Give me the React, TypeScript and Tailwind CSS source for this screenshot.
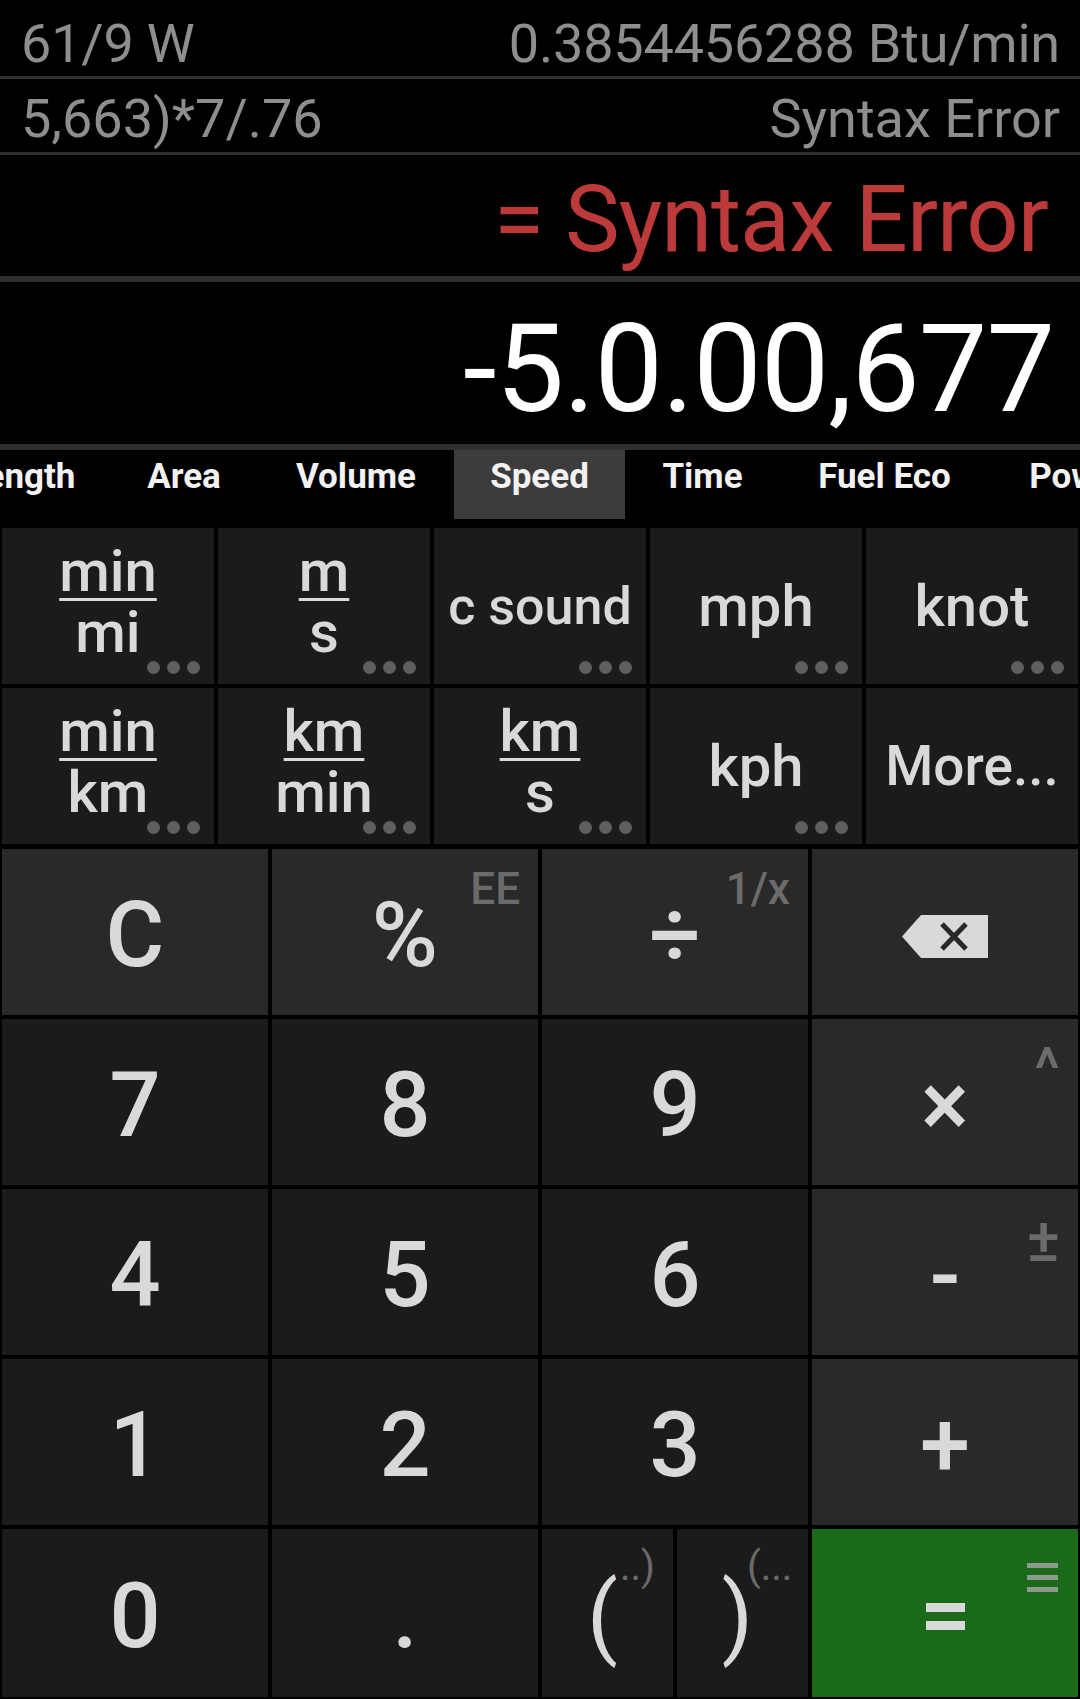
import React from "react";

const Dots = () => (
  <div className="absolute bottom-[10px] right-[14px] flex gap-[7px]">
    <div className="w-[13px] h-[13px] rounded-full bg-[#5e5e5e]" />
    <div className="w-[13px] h-[13px] rounded-full bg-[#5e5e5e]" />
    <div className="w-[13px] h-[13px] rounded-full bg-[#5e5e5e]" />
  </div>
);

const UnitKey = ({ num, den, label, size, dots = true }: { num?: string; den?: string; label?: string; size?: string; dots?: boolean }) => (
  <div className="relative bg-[#1b1b1b] flex flex-col items-center justify-center text-[#d9d9d9] font-medium">
    {label ? (
      <div className={`${size ?? "text-[58px]"} leading-[61px]`}>{label}</div>
    ) : (
      <div className="flex flex-col items-center pb-[8px] text-[58px] leading-[61px]">
        <div className="underline decoration-[3px] underline-offset-[7px]">{num}</div>
        <div>{den}</div>
      </div>
    )}
    {dots && <Dots />}
  </div>
);

const Sup = ({ children, cls = "" }: { children: React.ReactNode; cls?: string }) => (
  <div className={`absolute leading-none font-medium text-[#6b6b6b] ${cls}`}>{children}</div>
);

const BigKey = ({ children, bg = "bg-[#1b1b1b]", sup }: { children: React.ReactNode; bg?: string; sup?: React.ReactNode }) => (
  <div className={`relative ${bg} flex items-center justify-center text-[#d9d9d9] text-[90px] leading-none font-medium`}>
    <div className="pt-[8px]">{children}</div>
    {sup}
  </div>
);

const Backspace = () => (
  <svg width="86" height="43" viewBox="0 0 86 43">
    <polygon points="0,21.5 19,0 86,0 86,43 19,43" fill="#d9d9d9" />
    <path d="M40 9 L64 34 M64 9 L40 34" stroke="#292929" strokeWidth="5" />
  </svg>
);

export default function App() {
  const tabs = [
    { t: "Length", w: "w-[178px]" },
    { t: "Area", w: "w-[148px]" },
    { t: "Volume", w: "w-[196px]" },
    { t: "Speed", w: "w-[171px]", sel: true },
    { t: "Time", w: "w-[155px]" },
    { t: "Fuel Eco", w: "w-[209px]" },
    { t: "Power", w: "w-[180px]" },
  ];
  return (
    <div
      className="w-[1080px] h-[1699px] bg-black flex flex-col overflow-hidden"
      style={{ fontFamily: "Roboto, 'Noto Sans', sans-serif" }}
    >
      {/* history rows */}
      <div className="h-[76px] flex items-end justify-between pl-[21px] pr-[20px] pb-[5px] text-[54px] leading-none tracking-[-0.2px] text-[#8e8e8e]">
        <span>61/9 W</span>
        <span>0.3854456288 Btu/min</span>
      </div>
      <div className="h-[3px] bg-[#303030]" />
      <div className="h-[73px] flex items-end justify-between pl-[21px] pr-[20px] pb-[6px] text-[54px] leading-none text-[#8e8e8e]">
        <span>5,663)*7/.76</span>
        <span>Syntax Error</span>
      </div>
      <div className="h-[3px] bg-[#303030]" />
      <div className="h-[121px] flex items-end justify-end pr-[32px] pb-[10px] text-[92px] leading-none tracking-[-1px] text-[#bd3a3a]">
        = Syntax Error
      </div>
      <div className="h-[6px] bg-[#303030]" />
      <div className="h-[162px] flex items-end justify-end pr-[26px] pb-[13px] text-[122px] leading-none tracking-[-1px] text-white">
        -5.0.00,677
      </div>
      <div className="h-[6px] bg-[#303030]" />
      {/* tabs */}
      <div className="h-[70px] flex overflow-hidden">
        <div className="flex ml-[-68px] shrink-0">
          {tabs.map((tab) => (
            <div
              key={tab.t}
              className={`${tab.w} shrink-0 h-[69px] flex justify-center pt-[8px] text-[35px] leading-none font-bold text-[#f2f2f2] ${tab.sel ? "bg-[#3c3c3c]" : ""}`}
            >
              <span className="mt-[1px]">{tab.t}</span>
            </div>
          ))}
        </div>
      </div>
      <div className="h-[8px]" />
      {/* unit keys */}
      <div className="px-[2px] grid grid-cols-5 grid-rows-[156px_156px] gap-[4px]">
        <UnitKey num="min" den="mi" />
        <UnitKey num="m" den="s" />
        <UnitKey label="c sound" size="text-[52px]" />
        <UnitKey label="mph" />
        <UnitKey label="knot" />
        <UnitKey num="min" den="km" />
        <UnitKey num="km" den="min" />
        <UnitKey num="km" den="s" />
        <UnitKey label="kph" />
        <UnitKey label="More..." size="text-[55px]" dots={false} />
      </div>
      <div className="h-[5px]" />
      {/* main keypad */}
      <div className="flex-1 px-[2px] pb-[2px] grid grid-cols-4 grid-rows-[166px_166px_166px_166px_1fr] gap-[4px]">
        <BigKey bg="bg-[#292929]">C</BigKey>
        <BigKey bg="bg-[#292929]" sup={<Sup cls="top-[18px] right-[18px] text-[44px]">EE</Sup>}>%</BigKey>
        <BigKey bg="bg-[#292929]" sup={<Sup cls="top-[18px] right-[18px] text-[44px]">1/x</Sup>}>÷</BigKey>
        <BigKey bg="bg-[#292929]"><Backspace /></BigKey>

        <BigKey>7</BigKey>
        <BigKey>8</BigKey>
        <BigKey>9</BigKey>
        <BigKey bg="bg-[#292929]" sup={<Sup cls="top-[20px] right-[18px] text-[60px] font-bold">^</Sup>}>×</BigKey>

        <BigKey>4</BigKey>
        <BigKey>5</BigKey>
        <BigKey>6</BigKey>
        <BigKey bg="bg-[#292929]" sup={<Sup cls="top-[20px] right-[18px] text-[62px]">±</Sup>}>-</BigKey>

        <BigKey>1</BigKey>
        <BigKey>2</BigKey>
        <BigKey>3</BigKey>
        <BigKey bg="bg-[#292929]">+</BigKey>

        <BigKey>0</BigKey>
        <BigKey>.</BigKey>
        <div className="grid grid-cols-2 gap-[4px]">
          <div className="relative bg-[#1b1b1b] flex items-center justify-center text-[#d9d9d9] text-[90px] leading-none">
            <span className="ml-[-10px] pt-[8px]">(</span>
            <span className="absolute top-[18px] left-[78px] text-[40px] leading-none text-[#6b6b6b]">..)</span>
          </div>
          <div className="relative bg-[#1b1b1b] flex items-center justify-center text-[#d9d9d9] text-[90px] leading-none">
            <span className="ml-[-10px] pt-[8px]">)</span>
            <span className="absolute top-[18px] left-[70px] text-[40px] leading-none text-[#6b6b6b]">(...</span>
          </div>
        </div>
        <div className="relative bg-[#1b6a1a] flex items-center justify-center">
          <div className="flex flex-col gap-[9px] mt-[6px]">
            <div className="w-[39px] h-[9px] bg-[#d9d9d9]" />
            <div className="w-[39px] h-[9px] bg-[#d9d9d9]" />
          </div>
          <div className="absolute top-[34px] right-[20px] flex flex-col gap-[7px]">
            <div className="w-[31px] h-[5px] bg-[#8f9a8f]" />
            <div className="w-[31px] h-[5px] bg-[#8f9a8f]" />
            <div className="w-[31px] h-[5px] bg-[#8f9a8f]" />
          </div>
        </div>
      </div>
    </div>
  );
}
